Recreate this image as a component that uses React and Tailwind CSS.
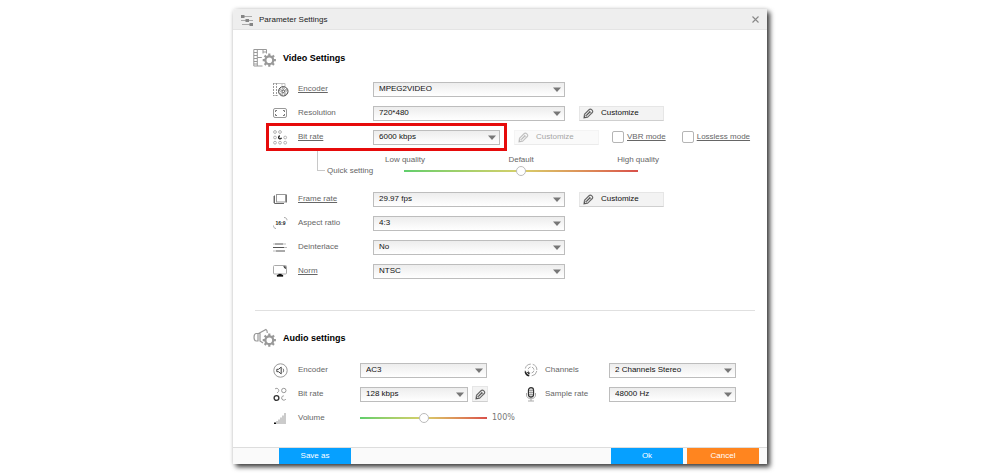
import { useState } from "react";

function Svg({ w = 15, h = 15, children }) {
  return (
    <svg
      width={w}
      height={h}
      viewBox={`0 0 ${w} ${h}`}
      fill="none"
      stroke="#777"
      strokeWidth="1"
      className="shrink-0"
      aria-hidden="true"
    >
      {children}
    </svg>
  );
}

function Gear() {
  return (
    <>
      <circle cx="16.3" cy="12.2" r="3.900" stroke="#999" strokeWidth="2.200" />
      <path
        d="M16.300 5.600v2.400M16.300 16.400v2.400M9.700 12.200h2.400M20.500 12.200h2.400M11.600 7.500l1.700 1.700M19.300 15.200l1.700 1.700M21 7.500l-1.700 1.700M13.300 15.200l-1.700 1.700"
        stroke="#999"
        strokeWidth="2.200"
      />
    </>
  );
}

const icons = {
  title: (
    <Svg w={12} h={12}>
      <path d="M0 2.500h11M0 6.500h12M1 10.500h11" stroke="#aaa" />
      <path d="M0 1h3.500v3H0zM4.500 5H8v3H4.500zM8.500 9H12v3H8.500z" fill="#858585" stroke="none" />
    </Svg>
  ),
  video: (
    <Svg w={24} h={20}>
      <path d="M9.500 18H.8V1.500h12.700v4M4.300 1.500V18M10 1.500v4M4.300 9.500h4.500M.8 4.500h3.500M.8 7.500h3.500M.8 10.500h3.500M.8 13.500h3.500M.8 16h3.500M10 4h3.500" stroke="#999" />
      <Gear />
    </Svg>
  ),
  audio: (
    <Svg w={24} h={20}>
      <path d="M5.500 5.500H3.500C.2 5.500.2 13 3.500 13h2M5 5.500V13M7 5v8.500M5.500 5.500l7.500-4c1 .5 1.300 1.800 1.300 3.500M7 13l3 2" stroke="#999" strokeWidth="1.200" />
      <Gear />
    </Svg>
  ),
  encoder: (
    <Svg w={16}>
      <path d="M5 13.500H.5M.5 1.500h11.500V4M9 1.500v2" stroke="#c0c0c0" />
      <path d="M.5 1v13M3.500 1v13" stroke="#999" strokeDasharray="2 1" />
      <circle cx="10.300" cy="9.300" r="4.700" stroke="#444" />
      <circle cx="10.300" cy="9.300" r="1.300" stroke="#444" strokeWidth=".9" />
      <g stroke="#777" strokeWidth=".7">
        <circle cx="10.300" cy="6.300" r="1" />
        <circle cx="13.100" cy="8.300" r="1" />
        <circle cx="12.100" cy="11.800" r="1" />
        <circle cx="8.500" cy="11.800" r="1" />
        <circle cx="7.500" cy="8.300" r="1" />
      </g>
    </Svg>
  ),
  resolution: (
    <Svg>
      <rect x=".5" y="2.500" width="13" height="9" rx="1.500" stroke="#999" />
      <path d="M2.500 6V4.500H4M10 4.500h1.500V6M11.500 8v1.500H10M4 9.500H2.500V8" stroke="#777" />
    </Svg>
  ),
  bitrate: (
    <Svg>
      <g stroke="#aaa" strokeWidth=".9">
        <circle cx="2" cy="2" r="1.400" />
        <circle cx="7" cy="2" r="1.400" />
        <circle cx="2" cy="7.500" r="1.400" />
        <circle cx="12.200" cy="7.500" r="1.400" />
        <circle cx="2" cy="12.700" r="1.400" />
        <circle cx="7" cy="12.700" r="1.400" />
        <circle cx="12.200" cy="12.700" r="1.400" />
      </g>
      <path d="M7 5.800a1.500 1.500 0 1 0 1.500 2" stroke="#222" strokeWidth="1.300" />
    </Svg>
  ),
  frame: (
    <Svg>
      <rect x="3.500" y="2.500" width="9" height="7.500" stroke="#999" />
      <path d="M13.500 2.500v8" stroke="#777" />
      <path d="M1.500 3.500v8H11" stroke="#666" />
      <path d="M.5 4v7" stroke="#bbb" />
    </Svg>
  ),
  aspect: (
    <Svg>
      <text
        x="7.500"
        y="9"
        textAnchor="middle"
        fill="#222"
        stroke="none"
        fontSize="5"
        fontWeight="bold"
        fontFamily="Liberation Sans, sans-serif"
      >
        16:9
      </text>
      <path d="M11 1.500c1.800 0 3 1 3 2.800M3 12.500C1.500 12.500.5 11.500.5 9.500" stroke="#aaa" />
    </Svg>
  ),
  deinterlace: (
    <Svg>
      <path d="M2 4h8M0 7.500h11M3 11h9" stroke="#555" />
      <path d="M10 4h3M11 7.500h3M0 11h3M0 4h2" stroke="#bbb" />
    </Svg>
  ),
  norm: (
    <Svg>
      <rect x=".5" y="1.500" width="13" height="8.500" rx="1" stroke="#aaa" />
      <path d="M10.500 2.500h2v2.500zM5.500 10h3v1h1.500v1.500H4V11h1.500z" fill="#111" stroke="#111" strokeWidth=".3" />
    </Svg>
  ),
  speaker: (
    <Svg>
      <circle cx="7.500" cy="7.500" r="6.700" stroke="#999" />
      <path d="M3.800 6.300h1.700l2.700-2.200v6.800L5.500 8.700H3.800z" stroke="#444" />
      <path d="M10 5.700c.8 1 .8 2.600 0 3.600" stroke="#555" />
    </Svg>
  ),
  audioBitrate: (
    <Svg>
      <circle cx="3.500" cy="11" r="2.400" stroke="#333" strokeWidth="1.300" />
      <circle cx="10.800" cy="3.500" r="2.200" stroke="#999" />
      <path d="M2 2a2.200 2.200 0 1 1 2 3.700M12.800 12a2.200 2.200 0 1 1-2-3.200" stroke="#999" />
    </Svg>
  ),
  volume: (
    <Svg>
      <path d="M4 13v-3M6 13V8.500M8 13V6.500M10 13V4.500M12 13V2" stroke="#b5b5b5" strokeWidth="1.400" />
      <path d="M1 11.500h2V13H1z" fill="#111" stroke="none" />
    </Svg>
  ),
  channels: (
    <Svg>
      <circle cx="7" cy="7" r="5.900" stroke="#aaa" strokeDasharray="7.300 2" strokeDashoffset="-1" />
      <circle cx="7" cy="7" r="3" stroke="#aaa" strokeDasharray="3.200 1.500" strokeDashoffset="-.7" />
      <path d="M1.200 8.500c.4 2.200 1.800 3.800 3.800 4.300M3.600 9c.4 1 1 1.400 1.900 1.800" stroke="#222" strokeWidth="1.400" />
    </Svg>
  ),
  mic: (
    <Svg>
      <rect x="4.500" y=".7" width="5" height="9.300" rx="2.500" stroke="#333" strokeWidth="1.300" />
      <path d="M5 3.500h4M5 5.500h4M5 7.500h4M7 1v9" stroke="#777" strokeWidth=".6" />
      <path d="M2.500 6v2c0 5 9 5 9 0V6M7 12v2M4 14h6" stroke="#aaa" />
    </Svg>
  ),
};

function Pencil() {
  return (
    <Svg w={11} h={11}>
      <path
        d="M1 9.800L1.500 6.300 6.300 1.500C7.800.1 10.700 3 9.300 4.500L4.500 9.300z"
        stroke="#666"
        strokeWidth="1.100"
      />
      <path d="M3.200 7.600L7.300 3.500" stroke="#555" strokeWidth="1.300" />
      <path d="M1.500 6.300l3 3M5.500 2.300l3 3" stroke="#777" strokeWidth=".8" />
      <path d="M1 9.800l.3-2 1.700 1.700z" fill="#444" stroke="none" />
    </Svg>
  );
}

function Row({ icon, label, id, link, labelWidth = "w-[75px]", children }) {
  return (
    <div className="flex h-6 items-center">
      <div className="w-[25px] shrink-0">{icons[icon]}</div>
      <label
        htmlFor={id}
        className={`${labelWidth} shrink-0 text-[#666] ${link ? "underline" : ""}`}
      >
        {label}
      </label>
      {children}
    </div>
  );
}

function Select({ id, value, width = "w-48" }) {
  return (
    <div className={`relative shrink-0 ${width}`}>
      <select
        id={id}
        defaultValue={value}
        className="block h-[15px] w-full appearance-none border border-[#bdbdbd] bg-linear-to-b from-[#ededed] to-white pl-[5px] text-[8px] leading-3 text-[#111] outline-none"
      >
        <option>{value}</option>
      </select>
      <svg
        width="8"
        height="5"
        viewBox="0 0 8 5"
        className="pointer-events-none absolute top-[5px] right-1"
        aria-hidden="true"
      >
        <path d="M0 .5h8L4 5z" fill="#777" />
      </svg>
    </div>
  );
}

function Customize({ disabled }) {
  return (
    <button
      disabled={disabled}
      className="ml-[14px] flex h-[15px] w-[85px] shrink-0 items-center gap-[7px] border border-[#e6e6e6] border-b-[#cfcfcf] bg-[#f3f3f3] pl-[3px] text-[#111] disabled:opacity-40"
    >
      <Pencil />
      Customize
    </button>
  );
}

function Check({ label }) {
  return (
    <label className="flex shrink-0 items-center gap-[3px] text-[#666] underline">
      <input
        type="checkbox"
        className="size-3 appearance-none rounded-xs border border-[#b5b5b5] bg-white checked:bg-[#0a9bff]"
      />
      {label}
    </label>
  );
}

function Slider({ id, value, onChange, className }) {
  return (
    <input
      id={id}
      type="range"
      value={value}
      onChange={onChange}
      className={`block h-[10px] appearance-none bg-linear-to-r from-[#5fce6c] via-[#d6cf6a] to-[#d84f4a] bg-[length:100%_2px] bg-center bg-no-repeat outline-none [&::-webkit-slider-thumb]:size-[10px] [&::-webkit-slider-thumb]:appearance-none [&::-webkit-slider-thumb]:rounded-full [&::-webkit-slider-thumb]:border [&::-webkit-slider-thumb]:border-[#bbb] [&::-webkit-slider-thumb]:bg-white ${className}`}
    />
  );
}

function Heading({ icon, children }) {
  return (
    <div className="flex h-5 items-center gap-[6px] pl-5">
      {icons[icon]}
      <h2 className="text-[9px] font-bold text-black">{children}</h2>
    </div>
  );
}

export default function App() {
  const [quality, setQuality] = useState(50);
  const [volume, setVolume] = useState(50);

  return (
    <main className="bg-white px-4 py-[9px] font-['Liberation_Sans',Arial,sans-serif] text-[8px] leading-3">
      <div className="mx-auto max-w-[534px] rounded-tl-sm bg-white shadow-[3px_3px_5px_rgba(0,0,0,0.75),0_0_4px_rgba(0,0,0,0.15)]">
        <header className="flex h-[21px] items-center rounded-tl-sm border-b border-[#e4e4e4] bg-[#eee] pt-px pr-[7px] pl-2">
          {icons.title}
          <h1 className="ml-[6px] text-[#222]">Parameter Settings</h1>
          <button aria-label="Close" className="ml-auto">
            <Svg w={9} h={9}>
              <path d="M1.500 1.500l6 6M7.500 1.500l-6 6" stroke="#888" strokeWidth="1.100" />
            </Svg>
          </button>
        </header>

        <section className="pt-[18px]">
          <Heading icon="video">Video Settings</Heading>
          <div className="mt-[9px] pl-10">
            <Row icon="encoder" label="Encoder" id="v-encoder" link>
              <Select id="v-encoder" value="MPEG2VIDEO" />
            </Row>
            <Row icon="resolution" label="Resolution" id="resolution">
              <Select id="resolution" value="720*480" />
              <Customize />
            </Row>
            <div className="flex items-center">
              <div className="relative">
                <Row icon="bitrate" label="Bit rate" id="v-bitrate" link>
                  <Select id="v-bitrate" value="6000 kbps" width="w-[127px]" />
                </Row>
                <div className="pointer-events-none absolute -inset-x-[7px] -inset-y-0.5 border-[3px] border-[#e60b0b]" />
              </div>
              <Customize disabled />
              <div className="ml-[13px] flex gap-4">
                <Check label="VBR mode" />
                <Check label="Lossless mode" />
              </div>
            </div>

            <div className="flex h-[38px] pl-11">
              <div className="h-[22px] w-2 border-b border-l border-[#c8c8c8]" />
              <label htmlFor="quality" className="mt-4 ml-[2px] w-[58px] text-[#666]">
                Quick setting
              </label>
              <div className="w-[274px] pt-[5px]">
                <div className="flex justify-between text-[#666]">
                  <span>Low quality</span>
                  <span>Default</span>
                  <span>High quality</span>
                </div>
                <Slider
                  id="quality"
                  value={quality}
                  onChange={(e) => setQuality(Number(e.target.value))}
                  className="ml-[19px] w-[234px]"
                />
              </div>
            </div>

            <Row icon="frame" label="Frame rate" id="fps" link>
              <Select id="fps" value="29.97 fps" />
              <Customize />
            </Row>
            <Row icon="aspect" label="Aspect ratio" id="aspect">
              <Select id="aspect" value="4:3" />
            </Row>
            <Row icon="deinterlace" label="Deinterlace" id="deinterlace">
              <Select id="deinterlace" value="No" />
            </Row>
            <Row icon="norm" label="Norm" id="norm" link>
              <Select id="norm" value="NTSC" />
            </Row>
          </div>
        </section>

        <hr className="mt-[27px] mr-3 ml-[22px] border-[#e0e0e0]" />

        <section className="pt-[17px] pb-[17px]">
          <Heading icon="audio">Audio settings</Heading>
          <div className="mt-[10px] flex pl-10">
            <div className="w-[251px]">
              <Row icon="speaker" label="Encoder" id="a-encoder" labelWidth="w-[62px]">
                <Select id="a-encoder" value="AC3" width="w-[127px]" />
              </Row>
              <Row icon="audioBitrate" label="Bit rate" id="a-bitrate" labelWidth="w-[62px]">
                <Select id="a-bitrate" value="128 kbps" width="w-[108px]" />
                <button
                  aria-label="Edit bit rate"
                  className="ml-1 flex size-4 items-center justify-center border border-[#e6e6e6] border-b-[#cfcfcf] bg-[#f3f3f3]"
                >
                  <Pencil />
                </button>
              </Row>
              <Row icon="volume" label="Volume" id="volume" labelWidth="w-[62px]">
                <Slider
                  id="volume"
                  value={volume}
                  onChange={(e) => setVolume(Number(e.target.value))}
                  className="w-[127px]"
                />
                <span className="ml-[5px] font-['DejaVu_Sans',sans-serif] text-[#777]">100%</span>
              </Row>
            </div>
            <div className="[&_label]:-ml-1">
              <Row icon="channels" label="Channels" id="channels" labelWidth="w-16">
                <Select id="channels" value="2 Channels Stereo" width="w-[127px]" />
              </Row>
              <Row icon="mic" label="Sample rate" id="sample" labelWidth="w-16">
                <Select id="sample" value="48000 Hz" width="w-[127px]" />
              </Row>
            </div>
          </div>
        </section>

        <footer className="flex h-[17px] gap-1 border-t border-[#ddd] bg-[#fafafa] pr-2 pl-[46px] text-white">
          <button className="mr-auto w-[72px] bg-[#06a0ff]">Save as</button>
          <button className="w-[72px] bg-[#06a0ff]">Ok</button>
          <button className="w-[72px] bg-[#ff851f]">Cancel</button>
        </footer>
      </div>
    </main>
  );
}
